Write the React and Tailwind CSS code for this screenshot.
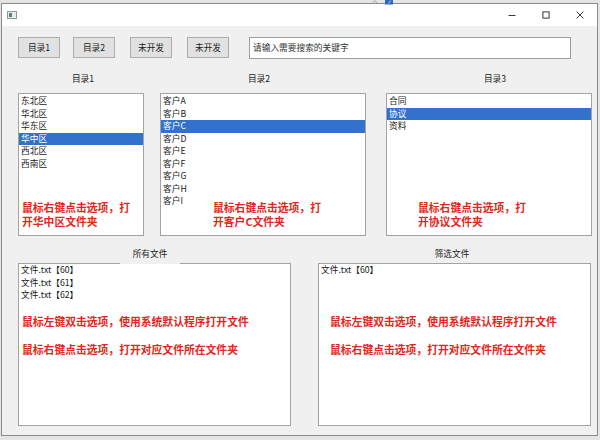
const list1 = ["东北区", "华北区", "华东区", "华中区", "西北区", "西南区"];
const list2 = ["客户A", "客户B", "客户C", "客户D", "客户E", "客户F", "客户G", "客户H", "客户I"];
const list3 = ["合同", "协议", "资料"];

function ListBox({ items, selected, width, children }) {
  return (
    <div className={`relative h-[143px] ${width} border border-[#a3a3a3] bg-white pt-[1px] overflow-hidden`}>
      {items.map((t, i) => (
        <div
          key={t}
          className={
            i === selected
              ? "h-[12.5px] leading-[12.5px] px-[2px] bg-[#3372cc] text-white"
              : "h-[12.5px] leading-[12.5px] px-[2px]"
          }
        >
          {t}
        </div>
      ))}
      {children}
    </div>
  );
}

function RedNote({ className, lines }) {
  return (
    <div className={`absolute top-[106px] text-[10.8px] leading-[14px] font-bold text-[#e3261c] whitespace-nowrap ${className}`}>
      {lines.map((l) => (
        <div key={l}>{l}</div>
      ))}
    </div>
  );
}

function Btn({ label, className = "" }) {
  return (
    <div className={`w-[42px] h-[21px] border border-[#adadad] bg-[#e1e1e1] flex items-center justify-center ${className}`}>
      {label}
    </div>
  );
}

export default function App() {
  return (
    <div className="relative w-[600px] h-[440px] bg-[#e4e4e4] overflow-hidden font-['Noto_Sans_CJK_SC','Noto_Sans',sans-serif] text-[8.7px] text-[#1a1a1a]">
      {/* fragment of a window behind */}
      <svg className="absolute left-[369px] top-0 z-10" width="26" height="5" viewBox="0 0 26 5">
        <path d="M3 4 L6 0.5 L9 4" fill="none" stroke="#9a9a9a" strokeWidth="0.8" />
        <rect x="16" y="0" width="8" height="4.5" fill="#2f66b8" />
        <path d="M21.5 0.5 L19.5 3.5" stroke="#dce8f8" strokeWidth="0.8" />
      </svg>

      <div className="ml-[1px] mt-[3px] w-[597px] h-[433px] border border-[#8c8c8c] bg-[#f0f0f0] flex flex-col">
        {/* title bar */}
        <div className="h-[22px] bg-white flex items-center">
          <svg className="ml-[5px]" width="10" height="8" viewBox="0 0 10 8">
            <rect x="0.5" y="0.5" width="9" height="7" fill="#e6ecec" stroke="#8e9a9a" />
            <rect x="2" y="2" width="3" height="4" fill="#5d7e80" />
          </svg>
          <div className="ml-auto flex">
            <div className="w-[34px] h-[22px] flex items-center justify-center">
              <svg width="8" height="8" viewBox="0 0 8 8">
                <path d="M0.5 4.5 H7.5" stroke="#222" strokeWidth="0.9" />
              </svg>
            </div>
            <div className="w-[34px] h-[22px] flex items-center justify-center">
              <svg width="8" height="8" viewBox="0 0 8 8">
                <rect x="0.9" y="0.9" width="6.2" height="6.2" fill="none" stroke="#222" strokeWidth="0.9" />
              </svg>
            </div>
            <div className="w-[34px] h-[22px] flex items-center justify-center">
              <svg width="8" height="8" viewBox="0 0 8 8">
                <path d="M0.6 0.6 L7.4 7.4 M7.4 0.6 L0.6 7.4" stroke="#222" strokeWidth="0.9" />
              </svg>
            </div>
          </div>
        </div>

        {/* client area */}
        <div className="flex-1 pl-[16px] pt-[11px]">
          <div className="flex items-start h-[22px]">
            <Btn label="目录1" />
            <Btn label="目录2" className="ml-[13px]" />
            <Btn label="未开发" className="ml-[15px]" />
            <Btn label="未开发" className="ml-[15px]" />
            <div className="ml-[20px] w-[322px] h-[22px] border border-[#9c9c9c] bg-white flex items-center pl-[3px] text-[#333]">
              请输入需要搜索的关键字
            </div>
          </div>

          <div className="mt-[14px] h-[12px] leading-[12px] flex">
            <div className="w-[126px] pl-[4px] text-center">目录1</div>
            <div className="ml-[16px] w-[206px] pr-[8px] text-center">目录2</div>
            <div className="ml-[20px] w-[206px] pl-[12px] text-center">目录3</div>
          </div>

          <div className="mt-[8px] flex">
            <ListBox items={list1} selected={3} width="w-[126px]">
              <RedNote className="left-[3px]" lines={["鼠标右键点击选项，打", "开华中区文件夹"]} />
            </ListBox>
            <div className="ml-[16px]">
              <ListBox items={list2} selected={2} width="w-[206px]">
                <RedNote className="left-[52px]" lines={["鼠标右键点击选项，打", "开客户C文件夹"]} />
              </ListBox>
            </div>
            <div className="ml-[20px]">
              <ListBox items={list3} selected={1} width="w-[206px]">
                <RedNote className="left-[31px]" lines={["鼠标右键点击选项，打", "开协议文件夹"]} />
              </ListBox>
            </div>
          </div>

          <div className="mt-[27px] flex">
            <div className="relative w-[273px] h-[163px] border border-[#a3a3a3] bg-white">
              <div className="absolute left-[101px] top-[-19px] w-[60px] h-[19px] leading-[18px] bg-[#f0f0f0] text-center">
                所有文件
              </div>
              {["文件.txt【60】", "文件.txt【61】", "文件.txt【62】"].map((t) => (
                <div key={t} className="h-[12.7px] leading-[12.7px] px-[2px]">{t}</div>
              ))}
              <div className="ml-[3px] mt-[12px] text-[10.8px] leading-[14px] font-bold text-[#e3261c] whitespace-nowrap">
                鼠标左键双击选项，使用系统默认程序打开文件
              </div>
              <div className="ml-[3px] mt-[14px] text-[10.8px] leading-[14px] font-bold text-[#e3261c] whitespace-nowrap">
                鼠标右键点击选项，打开对应文件所在文件夹
              </div>
            </div>
            <div className="relative ml-[27px] w-[273px] h-[163px] border border-[#a3a3a3] bg-white">
              <div className="absolute left-[103px] top-[-19px] w-[60px] h-[19px] leading-[18px] text-center">
                筛选文件
              </div>
              <div className="h-[12.7px] leading-[12.7px] px-[2px]">文件.txt【60】</div>
              <div className="ml-[11px] mt-[37px] text-[10.8px] leading-[14px] font-bold text-[#e3261c] whitespace-nowrap">
                鼠标左键双击选项，使用系统默认程序打开文件
              </div>
              <div className="ml-[11px] mt-[14px] text-[10.8px] leading-[14px] font-bold text-[#e3261c] whitespace-nowrap">
                鼠标右键点击选项，打开对应文件所在文件夹
              </div>
            </div>
          </div>
        </div>
      </div>
    </div>
  );
}
